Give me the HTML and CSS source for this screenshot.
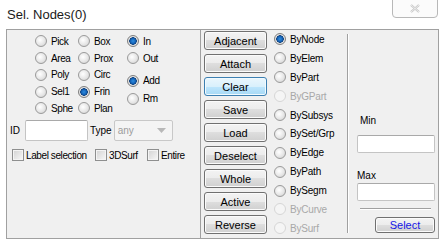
FILE: index.html
```html
<!DOCTYPE html>
<html lang="en">
<head>
  <meta charset="UTF-8">
  <meta name="viewport" content="width=device-width, initial-scale=1.0">
  <title>Sel. Nodes</title>
  <link rel="stylesheet" href="styles.css">
</head>
<body>
  <div class="titlebar">
    <span class="title">Sel. Nodes(0)</span>
    <button class="close" title="Close">
      <svg width="10" height="9" viewBox="0 0 10 9">
        <path d="M1 1 L9 8 M9 1 L1 8" stroke="#c4c4c4" stroke-width="2.2" fill="none"/>
        <path d="M1 1 L9 8 M9 1 L1 8" stroke="#f6f6f6" stroke-width="0.8" fill="none"/>
      </svg>
    </button>
  </div>

  <div class="dialog">
    <!-- pick mode -->
    <div class="pick-panel">
      <div class="radios">
        <div class="rcol first">
          <label class="radio"><span class="dot"></span>Pick</label>
          <label class="radio"><span class="dot"></span>Area</label>
          <label class="radio"><span class="dot"></span>Poly</label>
          <label class="radio"><span class="dot"></span>Sel1</label>
          <label class="radio"><span class="dot"></span>Sphe</label>
        </div>
        <div class="rcol second">
          <label class="radio"><span class="dot"></span>Box</label>
          <label class="radio"><span class="dot"></span>Prox</label>
          <label class="radio"><span class="dot"></span>Circ</label>
          <label class="radio"><span class="dot on"></span>Frin</label>
          <label class="radio"><span class="dot"></span>Plan</label>
        </div>
        <div class="rcol">
          <label class="radio"><span class="dot on"></span>In</label>
          <label class="radio"><span class="dot"></span>Out</label>
          <div class="group">
            <label class="radio tall"><span class="dot on"></span>Add</label>
            <label class="radio tall"><span class="dot"></span>Rm</label>
          </div>
        </div>
      </div>

      <div class="id-row">
        <span class="id-label">ID</span>
        <input class="field id-field" type="text">
        <span class="type-label">Type</span>
        <div class="combo">
          <span>any</span>
          <svg width="9" height="5" viewBox="0 0 9 5"><path d="M0 0 H9 L4.5 5 Z" fill="#b8b8b8"/></svg>
        </div>
      </div>

      <div class="check-row">
        <label class="check label-sel"><span class="box"></span>Label selection</label>
        <label class="check surf"><span class="box"></span>3DSurf</label>
        <label class="check"><span class="box"></span>Entire</label>
      </div>
    </div>

    <!-- actions -->
    <div class="actions">
      <button class="btn">Adjacent</button>
      <button class="btn">Attach</button>
      <button class="btn focus">Clear</button>
      <button class="btn">Save</button>
      <button class="btn">Load</button>
      <button class="btn">Deselect</button>
      <button class="btn">Whole</button>
      <button class="btn">Active</button>
      <button class="btn">Reverse</button>
    </div>

    <!-- select by -->
    <div class="by-list">
      <label class="radio"><span class="dot on"></span>ByNode</label>
      <label class="radio"><span class="dot"></span>ByElem</label>
      <label class="radio"><span class="dot"></span>ByPart</label>
      <label class="radio off"><span class="dot"></span>ByGPart</label>
      <label class="radio"><span class="dot"></span>BySubsys</label>
      <label class="radio"><span class="dot"></span>BySet/Grp</label>
      <label class="radio"><span class="dot"></span>ByEdge</label>
      <label class="radio"><span class="dot"></span>ByPath</label>
      <label class="radio"><span class="dot"></span>BySegm</label>
      <label class="radio off"><span class="dot"></span>ByCurve</label>
      <label class="radio off"><span class="dot"></span>BySurf</label>
    </div>

    <!-- range -->
    <div class="range">
      <span class="min-label">Min</span>
      <input class="field range-field" type="text">
      <span class="max-label">Max</span>
      <input class="field range-field max" type="text">
      <div class="sep"></div>
      <button class="btn select-btn">Select</button>
    </div>
  </div>
</body>
</html>
```

FILE: styles.css
```css
* {
  box-sizing: border-box;
}
body {
  margin: 0;
  width: 445px;
  height: 243px;
  overflow: hidden;
  background-color: #ffffff;
  font-family: "Liberation Sans", Arial, sans-serif;
  font-size: 10px;
  color: #000;
}
.titlebar {
  height: 29px;
  display: flex;
  justify-content: space-between;
  align-items: flex-start;
  padding-left: 7px;
}
.title {
  font-size: 13px;
  line-height: 16px;
  margin-top: 7px;
  color: #1a1a1a;
}
.close {
  width: 46px;
  height: 20px;
  margin: -2px 7px 0 0;
  padding: 0;
  border: 1px solid #b8b8b8;
  border-radius: 0 0 4px 4px;
  background-color: #fbfbfb;
  display: flex;
  align-items: center;
  justify-content: center;
}
.dialog {
  margin-left: 6px;
  width: 433px;
  height: 210px;
  border: 1px solid #a0a0a0;
  background-color: #f0f0f0;
  display: flex;
}

/* radios */
.radio {
  display: flex;
  align-items: center;
  height: 16.75px;
  letter-spacing: -0.4px;
  white-space: nowrap;
}
.dot {
  flex: none;
  width: 12px;
  height: 12px;
  margin-right: 4px;
  border-radius: 50%;
  border: 1px solid #9a9a9a;
  background: radial-gradient(circle at 40% 40%, #ffffff 0, #e6e6e6 55%, #c9c9c9 100%);
}
.dot.on {
  border-color: #7f7f7f;
  background: radial-gradient(circle, #2f8ee0 0, #1463b8 2.5px, #0c3f7c 3.5px, #e8e8e8 4px, #c8c8c8 100%);
}
.radio.off {
  color: #a8a8a8;
}
.radio.off .dot {
  border-color: #d6d6d6;
  background: #f5f5f5;
}

/* left panel */
.pick-panel {
  width: 194px;
  flex: none;
  border-right: 1px solid #a0a0a0;
  padding-top: 3px;
}
.radios {
  display: flex;
  height: 84px;
  padding-left: 28px;
}
.rcol.first {
  width: 43px;
}
.rcol.second {
  width: 49px;
}
.group {
  margin-top: 5px;
}
.radio.tall {
  height: 18px;
}
.id-row {
  display: flex;
  align-items: center;
  height: 21px;
  margin-top: 3px;
  padding-left: 3px;
}
.id-label {
  width: 15px;
}
.field {
  height: 21px;
  border: 1px solid #c4c4c4;
  border-top-color: #a9a9a9;
  border-radius: 2px;
  background-color: #fff;
  padding: 0;
}
.id-field {
  width: 63px;
}
.type-label {
  margin: 0 2px;
}
.combo {
  width: 59px;
  height: 21px;
  border: 1px solid #c8c8c8;
  border-radius: 2px;
  background-color: #f4f4f4;
  color: #9c9c9c;
  display: flex;
  align-items: center;
  justify-content: space-between;
  padding: 0 6px 0 3px;
}
.check-row {
  display: flex;
  align-items: center;
  height: 18px;
  margin-top: 5px;
  padding-left: 5px;
}
.check {
  display: flex;
  align-items: center;
  letter-spacing: -0.4px;
  white-space: nowrap;
}
.check.label-sel {
  width: 83px;
}
.check.surf {
  width: 52px;
}
.box {
  width: 12px;
  height: 12px;
  margin-right: 2px;
  border: 1px solid #8e8f8f;
  box-shadow: inset 0 0 0 1px #f4f4f4;
  background: linear-gradient(135deg, #d2d2d2, #f8f8f8);
}

/* buttons */
.actions {
  width: 70px;
  flex: none;
  display: flex;
  flex-direction: column;
  gap: 4px;
  padding: 1px 0 0 3px;
}
.btn {
  width: 63px;
  height: 19px;
  padding: 0;
  font-family: "Liberation Sans", Arial, sans-serif;
  font-size: 11px;
  color: #000;
  border: 1px solid #707070;
  border-radius: 3px;
  box-shadow: inset 0 0 0 1px #fbfbfb;
  background: linear-gradient(#f3f3f3 0, #ececec 50%, #dedede 50%, #d0d0d0 100%);
}
.btn.focus {
  border-color: #3c7fb1;
  box-shadow: inset 0 0 0 1px #f0faff;
  background: linear-gradient(#eaf6fd 0, #d9f0fc 50%, #bee6fd 50%, #a7d9f5 100%);
}

/* select by */
.by-list {
  width: 76px;
  flex: none;
  padding-left: 3px;
}
.by-list .radio {
  height: 18.9px;
  letter-spacing: -0.2px;
}

/* range */
.range {
  flex: 1;
  margin: 4px 0 5px;
  border-left: 1px solid #a0a0a0;
  box-shadow: inset 1px 0 #ffffff;
  display: flex;
  flex-direction: column;
  padding: 0 2px 0 9px;
}
.min-label {
  margin: 80px 0 0 3px;
  line-height: 13px;
}
.range-field {
  width: 78px;
  height: 18px;
  margin-top: 8px;
}
.range-field.max {
  height: 19px;
  margin-top: 1px;
}
.max-label {
  margin-top: 16px;
  line-height: 13px;
}
.sep {
  width: 71px;
  height: 2px;
  margin: 7px 0 0 3px;
  border-top: 1px solid #a0a0a0;
  border-bottom: 1px solid #ffffff;
}
.btn.select-btn {
  align-self: flex-end;
  width: 60px;
  height: 16px;
  margin: 7px 1px 0 0;
  line-height: 12px;
  color: #1515e6;
}
```
